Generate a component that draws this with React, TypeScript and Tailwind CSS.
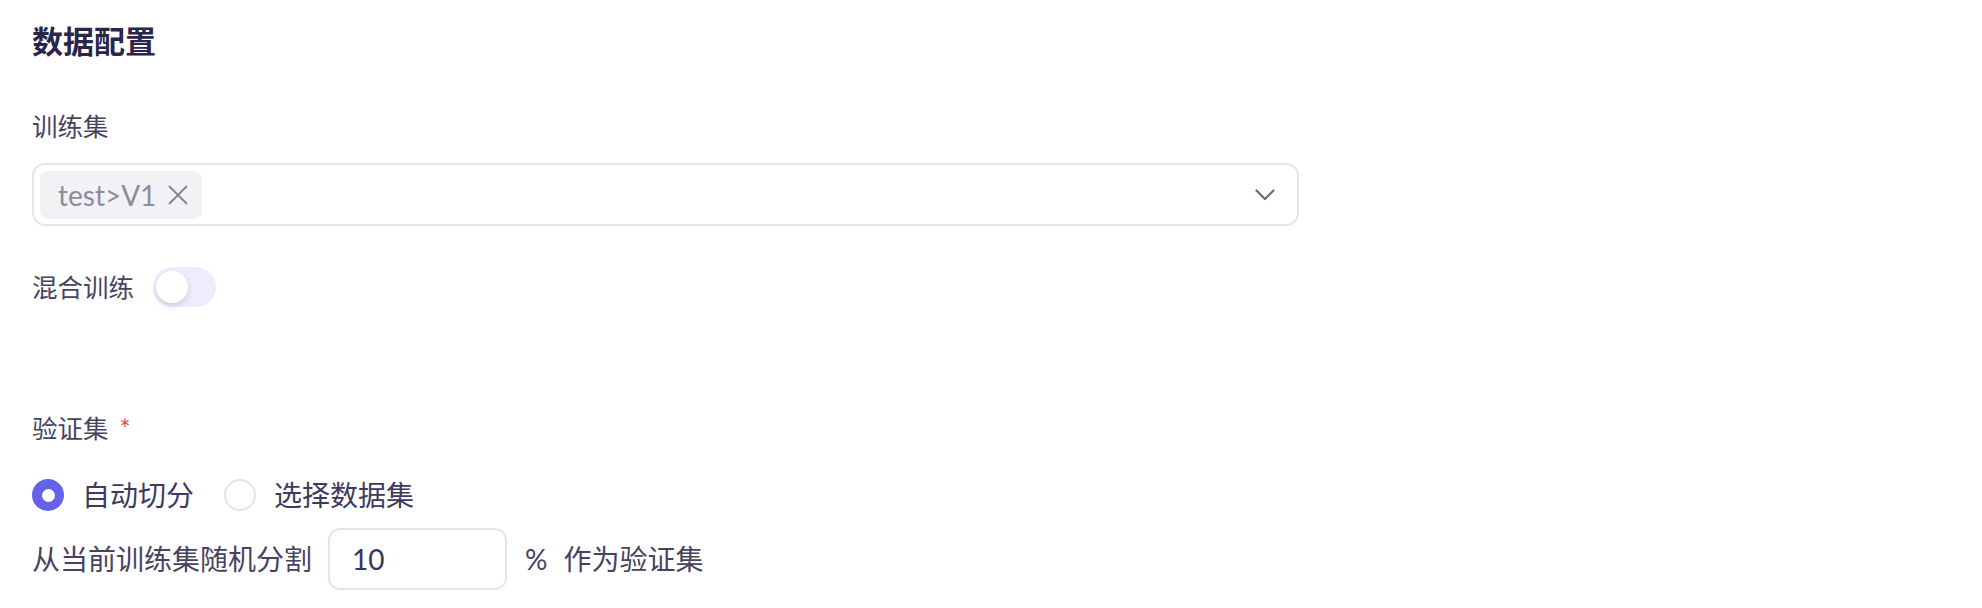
const CJK = "font-['Lato','Noto_Sans_CJK_SC',sans-serif]";

function Radio({ checked, label }: { checked: boolean; label: string }) {
  return (
    <label className="flex items-center gap-[18px] cursor-pointer">
      {checked ? (
        <span className="w-[32px] h-[32px] rounded-full bg-[#6462e8] flex items-center justify-center">
          <span className="w-[13px] h-[13px] rounded-full bg-white" />
        </span>
      ) : (
        <span className="w-[32px] h-[32px] rounded-full border-2 border-[#e4e2ee] bg-white" />
      )}
      <span className="text-[28px] text-[#3d3a5e]">{label}</span>
    </label>
  );
}

export default function App() {
  return (
    <div className={`w-[1982px] h-[608px] bg-white pl-[32px] ${CJK}`}>
      {/* Title */}
      <div className="h-[82px] flex items-center">
        <h2 className="text-[31px] font-semibold text-[#28264b] leading-none">数据配置</h2>
      </div>

      {/* Training set */}
      <div className="mt-[24px] h-[40px] flex items-center text-[25.5px] text-[#46435f]">训练集</div>
      <div className="mt-[17px] w-[1267px] h-[63px] border-2 border-[#e5e3ed] rounded-[13px] flex items-center pl-[6px] pr-[22px]">
        <div className="h-[48px] rounded-[8px] bg-[#f2f2f6] flex items-center pl-[18px] pr-[14px] gap-[12px]">
          <span className="text-[28px] text-[#8e8b9b] leading-none">test&gt;V1</span>
          <svg width="20" height="20" viewBox="0 0 20 20" fill="none">
            <path d="M1.5 1.5 L18.5 18.5 M18.5 1.5 L1.5 18.5" stroke="#86838f" strokeWidth="1.8" strokeLinecap="round" />
          </svg>
        </div>
        <div className="flex-1" />
        <svg width="20" height="12" viewBox="0 0 20 12" fill="none">
          <path d="M1.5 1.5 L10 10 L18.5 1.5" stroke="#6b6882" strokeWidth="2.2" strokeLinecap="round" strokeLinejoin="round" />
        </svg>
      </div>

      {/* Mixed training */}
      <div className="mt-[41px] h-[40px] flex items-center">
        <span className="text-[25.5px] text-[#46435f]">混合训练</span>
        <button className="ml-[19px] w-[63px] h-[40px] rounded-full bg-[#efedfc] flex items-center pl-[3px]">
          <span className="w-[32px] h-[32px] rounded-full bg-white shadow-[0_3px_6px_rgba(60,50,110,0.18)]" />
        </button>
      </div>

      {/* Validation set */}
      <div className="mt-[101px] h-[40px] flex items-center text-[25.5px] text-[#46435f]">
        验证集
        <span className="ml-[11px] text-[26px] text-[#f0474b] self-start mt-[8px] leading-none">*</span>
      </div>
      <div className="mt-[31px] h-[32px] flex items-center gap-[30px]">
        <Radio checked label="自动切分" />
        <Radio checked={false} label="选择数据集" />
      </div>

      <div className="mt-[17px] h-[62px] flex items-center text-[28px] text-[#46435f]">
        <span>从当前训练集随机分割</span>
        <div className="ml-[16px] w-[179px] h-[62px] border-2 border-[#e5e3ed] rounded-[12px] flex items-center pl-[22px] text-[#38355a]">
          10
        </div>
        <span className="ml-[18px]">%</span>
        <span className="ml-[16px]">作为验证集</span>
      </div>
    </div>
  );
}
